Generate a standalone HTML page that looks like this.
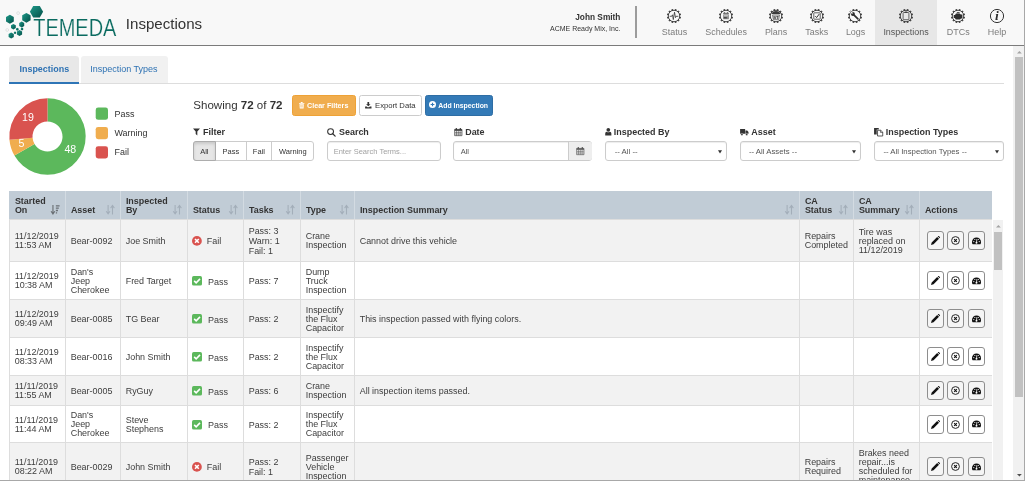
<!DOCTYPE html>
<html lang="en"><head><meta charset="utf-8"><title>Inspections</title>
<style>
html,body{margin:0;padding:0}
body{width:1025px;height:481px;overflow:hidden;position:relative;background:#fff;font-family:"Liberation Sans",Arial,Helvetica,sans-serif;color:#333}
.a{position:absolute}
.t{position:absolute;line-height:1;white-space:nowrap}
svg{position:absolute;overflow:visible}
#hdr{left:0;top:0;width:1025px;height:45px;background:#f8f8f8;border-bottom:1px solid #7b7b7b}
.nl{color:#858585}
.tab{position:absolute;top:56px;height:27px;border-radius:3px 3px 0 0}
.btn{position:absolute;top:95px;height:18.6px;border:1px solid;border-radius:2.5px}
.fc{position:absolute;top:141px;height:18px;border:1px solid #ccc;border-radius:3px;background:#fff;box-shadow:inset 0 1px 1px rgba(0,0,0,.075)}
.lb{font-weight:bold;color:#333}
.th{position:absolute;top:191px;height:28px;background:#c1ccd6;border-left:1px solid #d3dbe2;box-sizing:border-box}
.th .h{position:absolute;left:4.9px;bottom:3.6px;font-weight:bold;font-size:8.95px;line-height:9px;color:#333;white-space:nowrap}
.row{position:absolute;left:9px;width:983px;border-top:1px solid #ddd;box-sizing:border-box}
.odd{background:#f2f2f2}
.c{position:absolute;top:0;bottom:0;border-left:1px solid #ddd;box-sizing:border-box;display:flex;align-items:center;padding-left:4.7px;padding-top:1px;font-size:8.95px;line-height:9px;color:#3d3d3d}
.c.first{border-left-color:#ddd}
.tk{line-height:10px}
.st{font-size:9px;position:relative;top:1px}
.ab{position:absolute;width:15.2px;height:17px;border:1px solid #8e8e8e;border-radius:3px;top:50%;margin-top:-9.3px;background:rgba(255,255,255,.25)}
</style></head><body><div id="w" style="position:absolute;left:0;top:0;width:1025px;height:481px;will-change:transform">

<div class="a" id="hdr">
<div class="a" style="left:875px;top:0;width:62px;height:45px;background:#e7e7e7"></div>
<svg style="left:0;top:0" width="125" height="45" viewBox="0 0 125 45">
<defs><linearGradient id="hg" x1="0" y1="0" x2="1" y2="1"><stop offset="0" stop-color="#1f9a8a"/><stop offset="1" stop-color="#034f47"/></linearGradient></defs>
<g fill="url(#hg)">
<polygon points="43.1,11.8 39.8,17.5 33.2,17.5 29.9,11.8 33.2,6.1 39.8,6.1"/>
<polygon points="30.6,20.2 26.4,22.7 22.2,20.2 22.2,15.3 26.4,12.9 30.6,15.3"/>
<polygon points="13.8,21.4 9.9,23.7 6.0,21.4 6.0,16.9 9.9,14.7 13.8,16.9"/>
<polygon points="24.2,25.9 21.7,27.4 19.2,25.9 19.2,23.1 21.7,21.6 24.2,23.0"/>
<polygon points="15.8,28.1 13.4,29.5 11.0,28.1 11.0,25.3 13.4,23.9 15.8,25.3"/>
<polygon points="22.1,34.4 19.5,35.9 16.9,34.4 16.9,31.4 19.5,29.9 22.1,31.4"/>
<polygon points="13.8,36.9 11.2,38.4 8.6,36.9 8.6,33.9 11.2,32.4 13.8,33.9"/>
<polygon points="18.6,29.9 17.3,30.7 16.0,29.9 16.0,28.4 17.3,27.7 18.6,28.4"/>
<polygon points="23.2,29.7 22.0,30.4 20.8,29.7 20.8,28.3 22.0,27.6 23.2,28.3"/>
<polygon points="16.1,33.4 15.0,34.0 13.9,33.4 13.9,32.1 15.0,31.4 16.1,32.1"/>
</g>
<circle cx="18.1" cy="13.1" r="1.4" fill="none" stroke="#c9cfce" stroke-width=".5"/>
<circle cx="7.2" cy="30" r="1.4" fill="none" stroke="#c9cfce" stroke-width=".5"/>
<text x="33.2" y="35.8" font-family="Liberation Sans,Arial,sans-serif" font-size="23" fill="#0a6b60" stroke="#f8f8f8" stroke-width=".2" textLength="83.2" lengthAdjust="spacingAndGlyphs">TEMEDA</text>
</svg>
<div class="t " style="left:125.8px;top:16px;font-size:15.1px;color:#333">Inspections</div>
<div class="t" style="right:404.6px;top:13px;font-size:8.3px;font-weight:bold;color:#333">John Smith</div>
<div class="t" style="right:404.6px;top:25px;font-size:7px;color:#333">ACME Ready Mix, Inc.</div>
<div class="a" style="left:635px;top:6px;width:2px;height:32px;background:#9c9c9c"></div>
<svg style="left:666.3px;top:8.2px" width="16" height="16" viewBox="-8 -8 16 16"><g fill="#484848"><rect x="-.85" y="-7.15" width="1.7" height="1.5" rx=".4" transform="rotate(15)"/><rect x="-.85" y="-7.15" width="1.7" height="1.5" rx=".4" transform="rotate(45)"/><rect x="-.85" y="-7.15" width="1.7" height="1.5" rx=".4" transform="rotate(75)"/><rect x="-.85" y="-7.15" width="1.7" height="1.5" rx=".4" transform="rotate(105)"/><rect x="-.85" y="-7.15" width="1.7" height="1.5" rx=".4" transform="rotate(135)"/><rect x="-.85" y="-7.15" width="1.7" height="1.5" rx=".4" transform="rotate(165)"/><rect x="-.85" y="-7.15" width="1.7" height="1.5" rx=".4" transform="rotate(195)"/><rect x="-.85" y="-7.15" width="1.7" height="1.5" rx=".4" transform="rotate(225)"/><rect x="-.85" y="-7.15" width="1.7" height="1.5" rx=".4" transform="rotate(255)"/><rect x="-.85" y="-7.15" width="1.7" height="1.5" rx=".4" transform="rotate(285)"/><rect x="-.85" y="-7.15" width="1.7" height="1.5" rx=".4" transform="rotate(315)"/><rect x="-.85" y="-7.15" width="1.7" height="1.5" rx=".4" transform="rotate(345)"/></g><circle r="5.75" fill="none" stroke="#3a3a3a" stroke-width=".95"/><polyline points="-4.3,0.3 -2.3,0.3 -1.5,-1.2 -0.7,3.6 0.5,-3.8 1.5,1.6 2.1,0.3 4.3,0.3" fill="none" stroke="#333" stroke-width=".8" stroke-linejoin="round"/></svg>
<div class="t" style="left:574.5px;width:200px;text-align:center;top:28px;font-size:8.95px;color:#7c7c7c">Status</div>
<svg style="left:718px;top:8.2px" width="16" height="16" viewBox="-8 -8 16 16"><g fill="#484848"><rect x="-.85" y="-7.15" width="1.7" height="1.5" rx=".4" transform="rotate(15)"/><rect x="-.85" y="-7.15" width="1.7" height="1.5" rx=".4" transform="rotate(45)"/><rect x="-.85" y="-7.15" width="1.7" height="1.5" rx=".4" transform="rotate(75)"/><rect x="-.85" y="-7.15" width="1.7" height="1.5" rx=".4" transform="rotate(105)"/><rect x="-.85" y="-7.15" width="1.7" height="1.5" rx=".4" transform="rotate(135)"/><rect x="-.85" y="-7.15" width="1.7" height="1.5" rx=".4" transform="rotate(165)"/><rect x="-.85" y="-7.15" width="1.7" height="1.5" rx=".4" transform="rotate(195)"/><rect x="-.85" y="-7.15" width="1.7" height="1.5" rx=".4" transform="rotate(225)"/><rect x="-.85" y="-7.15" width="1.7" height="1.5" rx=".4" transform="rotate(255)"/><rect x="-.85" y="-7.15" width="1.7" height="1.5" rx=".4" transform="rotate(285)"/><rect x="-.85" y="-7.15" width="1.7" height="1.5" rx=".4" transform="rotate(315)"/><rect x="-.85" y="-7.15" width="1.7" height="1.5" rx=".4" transform="rotate(345)"/></g><circle r="5.75" fill="none" stroke="#3a3a3a" stroke-width=".95"/><rect x="-2.9" y="-1.7" width="5.8" height="4.9" rx=".4" fill="#8a8a8a"/><rect x="-2.9" y="-3.3" width="5.8" height="1.3" rx=".3" fill="#777"/><rect x="-2.2" y="-.5" width="4.4" height=".7" fill="#f4f4f4"/><rect x="-2.2" y="1.1" width="3" height="1.3" fill="#444"/><rect x="-1.8" y="-3.9" width=".8" height="1.2" fill="#555"/><rect x="1" y="-3.9" width=".8" height="1.2" fill="#555"/></svg>
<div class="t" style="left:626.2px;width:200px;text-align:center;top:28px;font-size:8.95px;color:#7c7c7c">Schedules</div>
<svg style="left:767.9px;top:8.2px" width="16" height="16" viewBox="-8 -8 16 16"><g fill="#484848"><rect x="-.85" y="-7.15" width="1.7" height="1.5" rx=".4" transform="rotate(15)"/><rect x="-.85" y="-7.15" width="1.7" height="1.5" rx=".4" transform="rotate(45)"/><rect x="-.85" y="-7.15" width="1.7" height="1.5" rx=".4" transform="rotate(75)"/><rect x="-.85" y="-7.15" width="1.7" height="1.5" rx=".4" transform="rotate(105)"/><rect x="-.85" y="-7.15" width="1.7" height="1.5" rx=".4" transform="rotate(135)"/><rect x="-.85" y="-7.15" width="1.7" height="1.5" rx=".4" transform="rotate(165)"/><rect x="-.85" y="-7.15" width="1.7" height="1.5" rx=".4" transform="rotate(195)"/><rect x="-.85" y="-7.15" width="1.7" height="1.5" rx=".4" transform="rotate(225)"/><rect x="-.85" y="-7.15" width="1.7" height="1.5" rx=".4" transform="rotate(255)"/><rect x="-.85" y="-7.15" width="1.7" height="1.5" rx=".4" transform="rotate(285)"/><rect x="-.85" y="-7.15" width="1.7" height="1.5" rx=".4" transform="rotate(315)"/><rect x="-.85" y="-7.15" width="1.7" height="1.5" rx=".4" transform="rotate(345)"/></g><circle r="5.75" fill="none" stroke="#3a3a3a" stroke-width=".95"/><path d="M-4.7,-1.9 A5.1,5.1 0 0 1 4.7,-1.9 Z" fill="#3a3a3a"/><path d="M-3.5,-1.1 H3.5 L2.6,3.7 H-2.6Z" fill="#d8d8d8" stroke="#555" stroke-width=".7"/><text x="0" y="2.7" font-size="4.3" font-weight="bold" text-anchor="middle" fill="#333" font-family="Liberation Sans,Arial,sans-serif">ST</text></svg>
<div class="t" style="left:676.1px;width:200px;text-align:center;top:28px;font-size:8.95px;color:#7c7c7c">Plans</div>
<svg style="left:808.5px;top:8.2px" width="16" height="16" viewBox="-8 -8 16 16"><g fill="#484848"><rect x="-.85" y="-7.15" width="1.7" height="1.5" rx=".4" transform="rotate(15)"/><rect x="-.85" y="-7.15" width="1.7" height="1.5" rx=".4" transform="rotate(45)"/><rect x="-.85" y="-7.15" width="1.7" height="1.5" rx=".4" transform="rotate(75)"/><rect x="-.85" y="-7.15" width="1.7" height="1.5" rx=".4" transform="rotate(105)"/><rect x="-.85" y="-7.15" width="1.7" height="1.5" rx=".4" transform="rotate(135)"/><rect x="-.85" y="-7.15" width="1.7" height="1.5" rx=".4" transform="rotate(165)"/><rect x="-.85" y="-7.15" width="1.7" height="1.5" rx=".4" transform="rotate(195)"/><rect x="-.85" y="-7.15" width="1.7" height="1.5" rx=".4" transform="rotate(225)"/><rect x="-.85" y="-7.15" width="1.7" height="1.5" rx=".4" transform="rotate(255)"/><rect x="-.85" y="-7.15" width="1.7" height="1.5" rx=".4" transform="rotate(285)"/><rect x="-.85" y="-7.15" width="1.7" height="1.5" rx=".4" transform="rotate(315)"/><rect x="-.85" y="-7.15" width="1.7" height="1.5" rx=".4" transform="rotate(345)"/></g><circle r="5.75" fill="none" stroke="#3a3a3a" stroke-width=".95"/><rect x="-3.2" y="-3.2" width="6.4" height="6.4" rx=".5" fill="none" stroke="#444" stroke-width=".85"/><polyline points="-1.7,0.1 -.4,1.6 2.2,-1.9" fill="none" stroke="#333" stroke-width="1"/></svg>
<div class="t" style="left:716.7px;width:200px;text-align:center;top:28px;font-size:8.95px;color:#7c7c7c">Tasks</div>
<svg style="left:847.4px;top:8.2px" width="16" height="16" viewBox="-8 -8 16 16"><g fill="#484848"><rect x="-.85" y="-7.15" width="1.7" height="1.5" rx=".4" transform="rotate(15)"/><rect x="-.85" y="-7.15" width="1.7" height="1.5" rx=".4" transform="rotate(45)"/><rect x="-.85" y="-7.15" width="1.7" height="1.5" rx=".4" transform="rotate(75)"/><rect x="-.85" y="-7.15" width="1.7" height="1.5" rx=".4" transform="rotate(105)"/><rect x="-.85" y="-7.15" width="1.7" height="1.5" rx=".4" transform="rotate(135)"/><rect x="-.85" y="-7.15" width="1.7" height="1.5" rx=".4" transform="rotate(165)"/><rect x="-.85" y="-7.15" width="1.7" height="1.5" rx=".4" transform="rotate(195)"/><rect x="-.85" y="-7.15" width="1.7" height="1.5" rx=".4" transform="rotate(225)"/><rect x="-.85" y="-7.15" width="1.7" height="1.5" rx=".4" transform="rotate(255)"/><rect x="-.85" y="-7.15" width="1.7" height="1.5" rx=".4" transform="rotate(285)"/><rect x="-.85" y="-7.15" width="1.7" height="1.5" rx=".4" transform="rotate(315)"/><rect x="-.85" y="-7.15" width="1.7" height="1.5" rx=".4" transform="rotate(345)"/></g><circle r="5.75" fill="none" stroke="#3a3a3a" stroke-width=".95"/><path d="M-1.2,-1.2 L2.9,2.9" stroke="#2e2e2e" stroke-width="1.7" stroke-linecap="round"/><circle cx="-2.1" cy="-2.1" r="2" fill="#2e2e2e"/><path d="M-2.5,-2.5 L-4.6,-4.6" stroke="#f8f8f8" stroke-width="1.3"/></svg>
<div class="t" style="left:755.6px;width:200px;text-align:center;top:28px;font-size:8.95px;color:#7c7c7c">Logs</div>
<svg style="left:897.8px;top:8.2px" width="16" height="16" viewBox="-8 -8 16 16"><g fill="#484848"><rect x="-.85" y="-7.15" width="1.7" height="1.5" rx=".4" transform="rotate(15)"/><rect x="-.85" y="-7.15" width="1.7" height="1.5" rx=".4" transform="rotate(45)"/><rect x="-.85" y="-7.15" width="1.7" height="1.5" rx=".4" transform="rotate(75)"/><rect x="-.85" y="-7.15" width="1.7" height="1.5" rx=".4" transform="rotate(105)"/><rect x="-.85" y="-7.15" width="1.7" height="1.5" rx=".4" transform="rotate(135)"/><rect x="-.85" y="-7.15" width="1.7" height="1.5" rx=".4" transform="rotate(165)"/><rect x="-.85" y="-7.15" width="1.7" height="1.5" rx=".4" transform="rotate(195)"/><rect x="-.85" y="-7.15" width="1.7" height="1.5" rx=".4" transform="rotate(225)"/><rect x="-.85" y="-7.15" width="1.7" height="1.5" rx=".4" transform="rotate(255)"/><rect x="-.85" y="-7.15" width="1.7" height="1.5" rx=".4" transform="rotate(285)"/><rect x="-.85" y="-7.15" width="1.7" height="1.5" rx=".4" transform="rotate(315)"/><rect x="-.85" y="-7.15" width="1.7" height="1.5" rx=".4" transform="rotate(345)"/></g><circle r="5.75" fill="none" stroke="#3a3a3a" stroke-width=".95"/><rect x="-2.9" y="-3.5" width="5.8" height="7.2" rx=".8" fill="none" stroke="#444" stroke-width=".8"/><rect x="-1.3" y="-4.6" width="2.6" height="1.5" rx=".3" fill="#444"/></svg>
<div class="t" style="left:806.0px;width:200px;text-align:center;top:28px;font-size:8.95px;color:#555">Inspections</div>
<svg style="left:950px;top:8.2px" width="16" height="16" viewBox="-8 -8 16 16"><g fill="#484848"><rect x="-.85" y="-7.15" width="1.7" height="1.5" rx=".4" transform="rotate(15)"/><rect x="-.85" y="-7.15" width="1.7" height="1.5" rx=".4" transform="rotate(45)"/><rect x="-.85" y="-7.15" width="1.7" height="1.5" rx=".4" transform="rotate(75)"/><rect x="-.85" y="-7.15" width="1.7" height="1.5" rx=".4" transform="rotate(105)"/><rect x="-.85" y="-7.15" width="1.7" height="1.5" rx=".4" transform="rotate(135)"/><rect x="-.85" y="-7.15" width="1.7" height="1.5" rx=".4" transform="rotate(165)"/><rect x="-.85" y="-7.15" width="1.7" height="1.5" rx=".4" transform="rotate(195)"/><rect x="-.85" y="-7.15" width="1.7" height="1.5" rx=".4" transform="rotate(225)"/><rect x="-.85" y="-7.15" width="1.7" height="1.5" rx=".4" transform="rotate(255)"/><rect x="-.85" y="-7.15" width="1.7" height="1.5" rx=".4" transform="rotate(285)"/><rect x="-.85" y="-7.15" width="1.7" height="1.5" rx=".4" transform="rotate(315)"/><rect x="-.85" y="-7.15" width="1.7" height="1.5" rx=".4" transform="rotate(345)"/></g><circle r="5.75" fill="none" stroke="#3a3a3a" stroke-width=".95"/><path d="M-4.3,-1 L-3,-1 L-2,-2.6 L1.6,-2.6 L2.8,-1.4 L4.4,-1.4 L4.4,2.4 L3,2.4 L2,3.5 L-2.2,3.5 L-3.2,2 L-4.3,2Z" fill="#2e2e2e"/><rect x="-1.2" y="-3.8" width="2.8" height="1" fill="#2e2e2e"/></svg>
<div class="t" style="left:858.2px;width:200px;text-align:center;top:28px;font-size:8.95px;color:#7c7c7c">DTCs</div>
<svg style="left:988.8px;top:8px" width="16" height="16" viewBox="-8 -8 16 16"><circle r="6.6" fill="none" stroke="#333" stroke-width="1"/><text x="-.2" y="4.3" font-size="13.5" font-style="italic" font-weight="bold" text-anchor="middle" fill="#2e2e2e" font-family="Liberation Serif,serif">i</text></svg>
<div class="t" style="left:897.0px;width:200px;text-align:center;top:28px;font-size:8.95px;color:#7c7c7c">Help</div>
</div>
<div class="a" style="left:9px;top:83px;width:995px;height:1px;background:#ddd"></div>
<div class="tab" style="left:9px;width:70px;background:#e8e8e8;border-bottom:2px solid #2e75b6;height:26px"></div>
<div class="tab" style="left:81px;width:87px;background:#f1f1f1"></div>
<div class="t " style="left:19.5px;top:65px;font-size:8.95px;font-weight:bold;color:#2e72b3">Inspections</div>
<div class="t " style="left:90.2px;top:65px;font-size:9px;color:#2e72b3">Inspection Types</div>
<svg style="left:0;top:90px" width="190" height="95" viewBox="0 90 190 95">
<path d="M47.50,98.30 A38.2,38.2 0 1 1 14.42,155.60 L34.51,144.00 A15,15 0 1 0 47.50,121.50Z" fill="#5cb85c"/>
<path d="M14.42,155.60 A38.2,38.2 0 0 1 9.45,139.83 L32.56,137.81 A15,15 0 0 0 34.51,144.00Z" fill="#f0ad4e"/>
<path d="M9.45,139.83 A38.2,38.2 0 0 1 47.50,98.30 L47.50,121.50 A15,15 0 0 0 32.56,137.81Z" fill="#d9534f"/>
<g font-family="Liberation Sans,Arial,sans-serif" font-size="10.6" fill="#fff">
<text x="22" y="121.2">19</text><text x="18.6" y="147.4">5</text><text x="64.4" y="152.7">48</text></g>
<rect x="95.7" y="107.5" width="12.3" height="12.3" rx="2.4" fill="#5cb85c"/>
<rect x="95.7" y="126.9" width="12.3" height="12.3" rx="2.4" fill="#f0ad4e"/>
<rect x="95.7" y="146.2" width="12.3" height="12.3" rx="2.4" fill="#d9534f"/>
</svg>
<div class="t " style="left:114.5px;top:110px;font-size:8.95px;color:#333">Pass</div>
<div class="t " style="left:114.5px;top:129px;font-size:8.95px;color:#333">Warning</div>
<div class="t " style="left:114.5px;top:148px;font-size:8.95px;color:#333">Fail</div>
<div class="t " style="left:193.3px;top:100px;font-size:11.55px;color:#333">Showing <b>72</b> of <b>72</b></div>
<div class="btn" style="left:292px;width:62px;background:#f0ad4e;border-color:#eea236"></div>
<div class="btn" style="left:359px;width:61px;background:#fff;border-color:#ccc"></div>
<div class="btn" style="left:425px;width:66px;background:#337ab7;border-color:#2e6da4"></div>
<svg style="left:299.3px;top:101.5px" width="5.4" height="6.6" viewBox="0 0 11 13"><path d="M0,2 H11 V3.4 H0Z M3.6,0 H7.4 V2 H3.6Z M1,4.2 H10 L9.4,13 H1.6Z" fill="#fff"/><path d="M3.4,5.8 V11 M5.5,5.8 V11 M7.6,5.8 V11" stroke="#f0ad4e" stroke-width=".9"/></svg>
<div class="t " style="left:307px;top:103px;font-size:7.17px;font-weight:bold;color:#fff">Clear Filters</div>
<svg style="left:365.2px;top:101.6px" width="6.6" height="6.4" viewBox="0 0 12 12"><path d="M4.4,0 H7.6 V4 H10.2 L6,8.2 L1.8,4 H4.4Z M0,8.6 H3 L4.4,10 H7.6 L9,8.6 H12 V12 H0Z" fill="#333"/></svg>
<div class="t " style="left:375px;top:102px;font-size:7.7px;color:#333">Export Data</div>
<svg style="left:429.2px;top:101.3px" width="7" height="7" viewBox="0 0 12 12"><circle cx="6" cy="6" r="6" fill="#fff"/><path d="M6,2.8 V9.2 M2.8,6 H9.2" stroke="#337ab7" stroke-width="1.9"/></svg>
<div class="t " style="left:438.2px;top:103px;font-size:6.92px;font-weight:bold;color:#fff">Add Inspection</div>
<svg style="left:193.2px;top:128.2px" width="7" height="7.8" viewBox="0 0 12 12"><path d="M0,0 H12 L7.4,5.4 V12 L4.6,9.8 V5.4Z" fill="#333"/></svg>
<div class="t lb" style="left:202.9px;top:128px;font-size:9.1px;">Filter</div>
<svg style="left:327px;top:127.6px" width="8.6" height="8.6" viewBox="0 0 12 12"><circle cx="5" cy="5" r="4.1" fill="none" stroke="#333" stroke-width="1.45"/><path d="M8,8 L11.4,11.4" stroke="#333" stroke-width="1.7" stroke-linecap="round"/></svg>
<div class="t lb" style="left:339px;top:128px;font-size:8.95px;">Search</div>
<svg style="left:454px;top:127.6px" width="8.6" height="8" viewBox="0 0 12 12"><path d="M.5,2.1 H11.5 V11.5 H.5Z" fill="#fff" stroke="#333" stroke-width="1"/><path d="M.5,2.1 H11.5 V4.2 H.5Z" fill="#333"/><path d="M3,0 V3 M9,0 V3" stroke="#333" stroke-width="1.7"/><path d="M1,6.6 H11 M1,9 H11 M3.3,4 V11.4 M6,4 V11.4 M8.7,4 V11.4" stroke="#333" stroke-width=".75"/></svg>
<div class="t lb" style="left:465.2px;top:128px;font-size:8.95px;">Date</div>
<svg style="left:605.2px;top:127.8px" width="6.6" height="7.4" viewBox="0 0 10 12"><circle cx="5" cy="3" r="3" fill="#333"/><path d="M0,12 V9 Q0,6.4 2.4,6.2 Q5,8 7.6,6.2 Q10,6.4 10,9 V12Z" fill="#333"/></svg>
<div class="t lb" style="left:613.8px;top:128px;font-size:8.95px;">Inspected By</div>
<svg style="left:739.8px;top:128.6px" width="8.6" height="6.6" viewBox="0 0 14 11"><path d="M0,0 H8.4 V8 H0Z M9,2.4 H11.8 L14,5 V8 H9Z" fill="#333"/><circle cx="3" cy="9" r="1.8" fill="#333" stroke="#fff" stroke-width=".6"/><circle cx="11" cy="9" r="1.8" fill="#333" stroke="#fff" stroke-width=".6"/></svg>
<div class="t lb" style="left:751.3px;top:128px;font-size:8.95px;">Asset</div>
<svg style="left:874px;top:127.6px" width="8.8" height="8" viewBox="0 0 13 12"><path d="M0,0 H7 V2.4 H4 V9.6 H0Z" fill="#333"/><path d="M5.2,3.4 H10 L13,6.2 V12 H5.2Z" fill="none" stroke="#333" stroke-width="1.2"/><path d="M9.6,3.4 V6.6 H13" fill="none" stroke="#333" stroke-width="1"/></svg>
<div class="t lb" style="left:885.8px;top:128px;font-size:8.95px;">Inspection Types</div>
<div class="fc" style="left:193px;width:118.6px;box-shadow:none"></div>
<div class="a" style="left:193px;top:141px;width:20.8px;height:18px;border:1px solid #adadad;border-radius:3px 0 0 3px;background:#e6e6e6;box-shadow:inset 0 2px 3px rgba(0,0,0,.125)"></div>
<div class="a" style="left:246px;top:142px;width:1px;height:18px;background:#ccc"></div>
<div class="a" style="left:271.3px;top:142px;width:1px;height:18px;background:#ccc"></div>
<div class="t" style="left:104.30000000000001px;width:200px;text-align:center;top:148px;font-size:7.5px;color:#333">All</div>
<div class="t" style="left:130.8px;width:200px;text-align:center;top:148px;font-size:7.5px;color:#333">Pass</div>
<div class="t" style="left:158.89999999999998px;width:200px;text-align:center;top:148px;font-size:7.5px;color:#333">Fail</div>
<div class="t" style="left:192.8px;width:200px;text-align:center;top:148px;font-size:7.5px;color:#333">Warning</div>
<div class="fc" style="left:327px;width:112px"></div>
<div class="t " style="left:333.7px;top:148px;font-size:7.5px;color:#a2a2a2">Enter Search Terms...</div>
<div class="fc" style="left:453.4px;width:136.6px"></div>
<div class="a" style="left:568px;top:142px;width:23px;height:18px;background:#eee;border-left:1px solid #ccc;border-radius:0 2px 2px 0"></div>
<svg style="left:575.6px;top:146.6px" width="8.6" height="8" viewBox="0 0 12 12"><path d="M.5,2.1 H11.5 V11.5 H.5Z" fill="#eee" stroke="#555" stroke-width="1"/><path d="M.5,2.1 H11.5 V4.2 H.5Z" fill="#555"/><path d="M3,0 V3 M9,0 V3" stroke="#555" stroke-width="1.7"/><path d="M1,6.6 H11 M1,9 H11 M3.3,4 V11.4 M6,4 V11.4 M8.7,4 V11.4" stroke="#555" stroke-width=".75"/></svg>
<div class="t " style="left:460.7px;top:148px;font-size:7.5px;color:#555">All</div>
<div class="fc" style="left:605.3px;width:119.6px"></div>
<div class="t " style="left:614.6999999999999px;top:148px;font-size:7.8px;color:#555">-- All --</div>
<svg style="left:717.9px;top:149.8px" width="4" height="3.7" viewBox="0 0 10 8"><path d="M0,0 H10 L5,8Z" fill="#333"/></svg>
<div class="fc" style="left:739.5px;width:119.6px"></div>
<div class="t " style="left:748.9px;top:148px;font-size:7.8px;color:#555">-- All Assets --</div>
<svg style="left:852.1px;top:149.8px" width="4" height="3.7" viewBox="0 0 10 8"><path d="M0,0 H10 L5,8Z" fill="#333"/></svg>
<div class="fc" style="left:874px;width:128px"></div>
<div class="t " style="left:883.4px;top:148px;font-size:7.8px;color:#555">-- All Inspection Types --</div>
<svg style="left:995px;top:149.8px" width="4" height="3.7" viewBox="0 0 10 8"><path d="M0,0 H10 L5,8Z" fill="#333"/></svg>
<div class="th" style="left:9px;width:56px;border-left-color:#c1ccd6;"><div class="h">Started<br>On</div><svg style="right:5.6px;bottom:5px" width="8.6" height="9.4" viewBox="0 0 11 12"><path d="M2.5,0 V10.6 M.1,8 L2.5,11.4 L4.9,8" fill="none" stroke="#6a6f74" stroke-width="1.45"/><path d="M6.2,1 H11 M6.2,4 H10 M6.2,7 H8.9 M6.2,10 H7.8" stroke="#6a6f74" stroke-width="1.7"/></svg></div>
<div class="th" style="left:65px;width:55px;"><div class="h">Asset</div><svg style="right:5.4px;bottom:5px" width="8.6" height="9.4" viewBox="0 0 11 12"><path d="M2.7,0 V10.6 M.3,8 L2.7,11.4 L5.1,8" fill="none" stroke="#a3aeb9" stroke-width="1.35"/><path d="M8.3,12 V1.4 M5.9,4 L8.3,.6 L10.7,4" fill="none" stroke="#a3aeb9" stroke-width="1.35"/></svg></div>
<div class="th" style="left:120px;width:67px;"><div class="h">Inspected<br>By</div><svg style="right:5.4px;bottom:5px" width="8.6" height="9.4" viewBox="0 0 11 12"><path d="M2.7,0 V10.6 M.3,8 L2.7,11.4 L5.1,8" fill="none" stroke="#a3aeb9" stroke-width="1.35"/><path d="M8.3,12 V1.4 M5.9,4 L8.3,.6 L10.7,4" fill="none" stroke="#a3aeb9" stroke-width="1.35"/></svg></div>
<div class="th" style="left:187px;width:56px;"><div class="h">Status</div><svg style="right:5.4px;bottom:5px" width="8.6" height="9.4" viewBox="0 0 11 12"><path d="M2.7,0 V10.6 M.3,8 L2.7,11.4 L5.1,8" fill="none" stroke="#a3aeb9" stroke-width="1.35"/><path d="M8.3,12 V1.4 M5.9,4 L8.3,.6 L10.7,4" fill="none" stroke="#a3aeb9" stroke-width="1.35"/></svg></div>
<div class="th" style="left:243px;width:57px;"><div class="h">Tasks</div><svg style="right:5.4px;bottom:5px" width="8.6" height="9.4" viewBox="0 0 11 12"><path d="M2.7,0 V10.6 M.3,8 L2.7,11.4 L5.1,8" fill="none" stroke="#a3aeb9" stroke-width="1.35"/><path d="M8.3,12 V1.4 M5.9,4 L8.3,.6 L10.7,4" fill="none" stroke="#a3aeb9" stroke-width="1.35"/></svg></div>
<div class="th" style="left:300px;width:54px;"><div class="h">Type</div><svg style="right:5.4px;bottom:5px" width="8.6" height="9.4" viewBox="0 0 11 12"><path d="M2.7,0 V10.6 M.3,8 L2.7,11.4 L5.1,8" fill="none" stroke="#a3aeb9" stroke-width="1.35"/><path d="M8.3,12 V1.4 M5.9,4 L8.3,.6 L10.7,4" fill="none" stroke="#a3aeb9" stroke-width="1.35"/></svg></div>
<div class="th" style="left:354px;width:445px;"><div class="h">Inspection Summary</div><svg style="right:5.4px;bottom:5px" width="8.6" height="9.4" viewBox="0 0 11 12"><path d="M2.7,0 V10.6 M.3,8 L2.7,11.4 L5.1,8" fill="none" stroke="#a3aeb9" stroke-width="1.35"/><path d="M8.3,12 V1.4 M5.9,4 L8.3,.6 L10.7,4" fill="none" stroke="#a3aeb9" stroke-width="1.35"/></svg></div>
<div class="th" style="left:799px;width:54px;"><div class="h">CA<br>Status</div><svg style="right:5.4px;bottom:5px" width="8.6" height="9.4" viewBox="0 0 11 12"><path d="M2.7,0 V10.6 M.3,8 L2.7,11.4 L5.1,8" fill="none" stroke="#a3aeb9" stroke-width="1.35"/><path d="M8.3,12 V1.4 M5.9,4 L8.3,.6 L10.7,4" fill="none" stroke="#a3aeb9" stroke-width="1.35"/></svg></div>
<div class="th" style="left:853px;width:66px;"><div class="h">CA<br>Summary</div><svg style="right:5.4px;bottom:5px" width="8.6" height="9.4" viewBox="0 0 11 12"><path d="M2.7,0 V10.6 M.3,8 L2.7,11.4 L5.1,8" fill="none" stroke="#a3aeb9" stroke-width="1.35"/><path d="M8.3,12 V1.4 M5.9,4 L8.3,.6 L10.7,4" fill="none" stroke="#a3aeb9" stroke-width="1.35"/></svg></div>
<div class="th" style="left:919px;width:73px;"><div class="h">Actions</div></div>
<div class="a" style="left:0;top:219px;width:1013px;height:261px;overflow:hidden">
<div class="row odd" style="top:0px;height:42px">
<div class="c" style="left:0px;width:56px;border-left-color:transparent;"><div style="display:flex;align-items:center">11/12/2019<br>11:53 AM</div></div>
<div class="c" style="left:56px;width:55px;"><div style="display:flex;align-items:center">Bear-0092</div></div>
<div class="c" style="left:111px;width:67px;"><div style="display:flex;align-items:center">Joe Smith</div></div>
<div class="c" style="left:178px;width:56px;"><div style="display:flex;align-items:center"><svg style="position:static;flex:none;margin-left:-.8px;margin-right:5px" width="9.8" height="9.8" viewBox="0 0 12 12"><circle cx="6" cy="6" r="6" fill="#d9534f"/><path d="M3.7,3.7 L8.3,8.3 M8.3,3.7 L3.7,8.3" stroke="#fff" stroke-width="2"/></svg><span class="st">Fail</span></div></div>
<div class="c tk" style="left:234px;width:57px;"><div style="display:flex;align-items:center">Pass: 3<br>Warn: 1<br>Fail: 1</div></div>
<div class="c" style="left:291px;width:54px;"><div style="display:flex;align-items:center">Crane<br>Inspection</div></div>
<div class="c" style="left:345px;width:445px;"><div style="display:flex;align-items:center">Cannot drive this vehicle</div></div>
<div class="c" style="left:790px;width:54px;"><div style="display:flex;align-items:center">Repairs<br>Completed</div></div>
<div class="c" style="left:844px;width:66px;"><div style="display:flex;align-items:center">Tire was<br>replaced on<br>11/12/2019</div></div>
<div class="c" style="left:910px;width:73px"><div class="ab" style="left:7px"><svg style="left:3.2px;top:4.2px" width="9" height="9" viewBox="0 0 12 12"><path d="M0,12 L.9,8.6 L8.2,1.3 L10.7,3.8 L3.4,11.1Z M9,.5 L9.6,0 Q10.2,-.3 10.8,.3 L11.7,1.2 Q12.3,1.8 12,2.4 L11.5,3Z" fill="#111"/></svg></div><div class="ab" style="left:27.2px"><svg style="left:3.1px;top:4.2px" width="9" height="9" viewBox="0 0 12 12"><circle cx="6" cy="6" r="5.2" fill="none" stroke="#111" stroke-width="1.2"/><path d="M4.2,4.2 L7.8,7.8 M7.8,4.2 L4.2,7.8" stroke="#111" stroke-width="1.5"/></svg></div><div class="ab" style="left:47.5px"><svg style="left:3.1px;top:4.6px" width="9" height="7.2" viewBox="0 0 14 11"><path d="M0,8 A7,7.4 0 0 1 14,8 Q14,10 13,11 H1 Q0,10 0,8Z" fill="#111"/><circle cx="2.8" cy="7" r=".9" fill="#fff"/><circle cx="4.4" cy="3.8" r=".9" fill="#fff"/><circle cx="9.8" cy="3.8" r=".9" fill="#fff"/><circle cx="11.3" cy="7" r=".9" fill="#fff"/><path d="M7,9 L7.6,3" stroke="#fff" stroke-width="1.2"/><circle cx="7" cy="8.8" r="1.5" fill="#fff"/></svg></div></div>
</div>
<div class="row " style="top:42px;height:38px">
<div class="c" style="left:0px;width:56px;border-left-color:transparent;"><div style="display:flex;align-items:center">11/12/2019<br>10:38 AM</div></div>
<div class="c" style="left:56px;width:55px;"><div style="display:flex;align-items:center">Dan's<br>Jeep<br>Cherokee</div></div>
<div class="c" style="left:111px;width:67px;"><div style="display:flex;align-items:center">Fred Target</div></div>
<div class="c" style="left:178px;width:56px;"><div style="display:flex;align-items:center"><svg style="position:static;flex:none;margin-left:-.5px;margin-right:5.8px" width="10" height="9.6" viewBox="0 0 12 11.5"><rect width="12" height="11.5" rx="2" fill="#5cb85c"/><path d="M2.6,5.8 L5,8.2 L9.6,3.4" fill="none" stroke="#fff" stroke-width="1.9"/></svg><span class="st">Pass</span></div></div>
<div class="c tk" style="left:234px;width:57px;"><div style="display:flex;align-items:center">Pass: 7</div></div>
<div class="c" style="left:291px;width:54px;"><div style="display:flex;align-items:center">Dump<br>Truck<br>Inspection</div></div>
<div class="c" style="left:345px;width:445px;"><div style="display:flex;align-items:center"></div></div>
<div class="c" style="left:790px;width:54px;"><div style="display:flex;align-items:center"></div></div>
<div class="c" style="left:844px;width:66px;"><div style="display:flex;align-items:center"></div></div>
<div class="c" style="left:910px;width:73px"><div class="ab" style="left:7px"><svg style="left:3.2px;top:4.2px" width="9" height="9" viewBox="0 0 12 12"><path d="M0,12 L.9,8.6 L8.2,1.3 L10.7,3.8 L3.4,11.1Z M9,.5 L9.6,0 Q10.2,-.3 10.8,.3 L11.7,1.2 Q12.3,1.8 12,2.4 L11.5,3Z" fill="#111"/></svg></div><div class="ab" style="left:27.2px"><svg style="left:3.1px;top:4.2px" width="9" height="9" viewBox="0 0 12 12"><circle cx="6" cy="6" r="5.2" fill="none" stroke="#111" stroke-width="1.2"/><path d="M4.2,4.2 L7.8,7.8 M7.8,4.2 L4.2,7.8" stroke="#111" stroke-width="1.5"/></svg></div><div class="ab" style="left:47.5px"><svg style="left:3.1px;top:4.6px" width="9" height="7.2" viewBox="0 0 14 11"><path d="M0,8 A7,7.4 0 0 1 14,8 Q14,10 13,11 H1 Q0,10 0,8Z" fill="#111"/><circle cx="2.8" cy="7" r=".9" fill="#fff"/><circle cx="4.4" cy="3.8" r=".9" fill="#fff"/><circle cx="9.8" cy="3.8" r=".9" fill="#fff"/><circle cx="11.3" cy="7" r=".9" fill="#fff"/><path d="M7,9 L7.6,3" stroke="#fff" stroke-width="1.2"/><circle cx="7" cy="8.8" r="1.5" fill="#fff"/></svg></div></div>
</div>
<div class="row odd" style="top:80px;height:38px">
<div class="c" style="left:0px;width:56px;border-left-color:transparent;"><div style="display:flex;align-items:center">11/12/2019<br>09:49 AM</div></div>
<div class="c" style="left:56px;width:55px;"><div style="display:flex;align-items:center">Bear-0085</div></div>
<div class="c" style="left:111px;width:67px;"><div style="display:flex;align-items:center">TG Bear</div></div>
<div class="c" style="left:178px;width:56px;"><div style="display:flex;align-items:center"><svg style="position:static;flex:none;margin-left:-.5px;margin-right:5.8px" width="10" height="9.6" viewBox="0 0 12 11.5"><rect width="12" height="11.5" rx="2" fill="#5cb85c"/><path d="M2.6,5.8 L5,8.2 L9.6,3.4" fill="none" stroke="#fff" stroke-width="1.9"/></svg><span class="st">Pass</span></div></div>
<div class="c tk" style="left:234px;width:57px;"><div style="display:flex;align-items:center">Pass: 2</div></div>
<div class="c" style="left:291px;width:54px;"><div style="display:flex;align-items:center">Inspectify<br>the Flux<br>Capacitor</div></div>
<div class="c" style="left:345px;width:445px;"><div style="display:flex;align-items:center">This inspection passed with flying colors.</div></div>
<div class="c" style="left:790px;width:54px;"><div style="display:flex;align-items:center"></div></div>
<div class="c" style="left:844px;width:66px;"><div style="display:flex;align-items:center"></div></div>
<div class="c" style="left:910px;width:73px"><div class="ab" style="left:7px"><svg style="left:3.2px;top:4.2px" width="9" height="9" viewBox="0 0 12 12"><path d="M0,12 L.9,8.6 L8.2,1.3 L10.7,3.8 L3.4,11.1Z M9,.5 L9.6,0 Q10.2,-.3 10.8,.3 L11.7,1.2 Q12.3,1.8 12,2.4 L11.5,3Z" fill="#111"/></svg></div><div class="ab" style="left:27.2px"><svg style="left:3.1px;top:4.2px" width="9" height="9" viewBox="0 0 12 12"><circle cx="6" cy="6" r="5.2" fill="none" stroke="#111" stroke-width="1.2"/><path d="M4.2,4.2 L7.8,7.8 M7.8,4.2 L4.2,7.8" stroke="#111" stroke-width="1.5"/></svg></div><div class="ab" style="left:47.5px"><svg style="left:3.1px;top:4.6px" width="9" height="7.2" viewBox="0 0 14 11"><path d="M0,8 A7,7.4 0 0 1 14,8 Q14,10 13,11 H1 Q0,10 0,8Z" fill="#111"/><circle cx="2.8" cy="7" r=".9" fill="#fff"/><circle cx="4.4" cy="3.8" r=".9" fill="#fff"/><circle cx="9.8" cy="3.8" r=".9" fill="#fff"/><circle cx="11.3" cy="7" r=".9" fill="#fff"/><path d="M7,9 L7.6,3" stroke="#fff" stroke-width="1.2"/><circle cx="7" cy="8.8" r="1.5" fill="#fff"/></svg></div></div>
</div>
<div class="row " style="top:118px;height:38px">
<div class="c" style="left:0px;width:56px;border-left-color:transparent;"><div style="display:flex;align-items:center">11/12/2019<br>08:33 AM</div></div>
<div class="c" style="left:56px;width:55px;"><div style="display:flex;align-items:center">Bear-0016</div></div>
<div class="c" style="left:111px;width:67px;"><div style="display:flex;align-items:center">John Smith</div></div>
<div class="c" style="left:178px;width:56px;"><div style="display:flex;align-items:center"><svg style="position:static;flex:none;margin-left:-.5px;margin-right:5.8px" width="10" height="9.6" viewBox="0 0 12 11.5"><rect width="12" height="11.5" rx="2" fill="#5cb85c"/><path d="M2.6,5.8 L5,8.2 L9.6,3.4" fill="none" stroke="#fff" stroke-width="1.9"/></svg><span class="st">Pass</span></div></div>
<div class="c tk" style="left:234px;width:57px;"><div style="display:flex;align-items:center">Pass: 2</div></div>
<div class="c" style="left:291px;width:54px;"><div style="display:flex;align-items:center">Inspectify<br>the Flux<br>Capacitor</div></div>
<div class="c" style="left:345px;width:445px;"><div style="display:flex;align-items:center"></div></div>
<div class="c" style="left:790px;width:54px;"><div style="display:flex;align-items:center"></div></div>
<div class="c" style="left:844px;width:66px;"><div style="display:flex;align-items:center"></div></div>
<div class="c" style="left:910px;width:73px"><div class="ab" style="left:7px"><svg style="left:3.2px;top:4.2px" width="9" height="9" viewBox="0 0 12 12"><path d="M0,12 L.9,8.6 L8.2,1.3 L10.7,3.8 L3.4,11.1Z M9,.5 L9.6,0 Q10.2,-.3 10.8,.3 L11.7,1.2 Q12.3,1.8 12,2.4 L11.5,3Z" fill="#111"/></svg></div><div class="ab" style="left:27.2px"><svg style="left:3.1px;top:4.2px" width="9" height="9" viewBox="0 0 12 12"><circle cx="6" cy="6" r="5.2" fill="none" stroke="#111" stroke-width="1.2"/><path d="M4.2,4.2 L7.8,7.8 M7.8,4.2 L4.2,7.8" stroke="#111" stroke-width="1.5"/></svg></div><div class="ab" style="left:47.5px"><svg style="left:3.1px;top:4.6px" width="9" height="7.2" viewBox="0 0 14 11"><path d="M0,8 A7,7.4 0 0 1 14,8 Q14,10 13,11 H1 Q0,10 0,8Z" fill="#111"/><circle cx="2.8" cy="7" r=".9" fill="#fff"/><circle cx="4.4" cy="3.8" r=".9" fill="#fff"/><circle cx="9.8" cy="3.8" r=".9" fill="#fff"/><circle cx="11.3" cy="7" r=".9" fill="#fff"/><path d="M7,9 L7.6,3" stroke="#fff" stroke-width="1.2"/><circle cx="7" cy="8.8" r="1.5" fill="#fff"/></svg></div></div>
</div>
<div class="row odd" style="top:156px;height:30px">
<div class="c" style="left:0px;width:56px;border-left-color:transparent;"><div style="display:flex;align-items:center">11/11/2019<br>11:55 AM</div></div>
<div class="c" style="left:56px;width:55px;"><div style="display:flex;align-items:center">Bear-0005</div></div>
<div class="c" style="left:111px;width:67px;"><div style="display:flex;align-items:center">RyGuy</div></div>
<div class="c" style="left:178px;width:56px;"><div style="display:flex;align-items:center"><svg style="position:static;flex:none;margin-left:-.5px;margin-right:5.8px" width="10" height="9.6" viewBox="0 0 12 11.5"><rect width="12" height="11.5" rx="2" fill="#5cb85c"/><path d="M2.6,5.8 L5,8.2 L9.6,3.4" fill="none" stroke="#fff" stroke-width="1.9"/></svg><span class="st">Pass</span></div></div>
<div class="c tk" style="left:234px;width:57px;"><div style="display:flex;align-items:center">Pass: 6</div></div>
<div class="c" style="left:291px;width:54px;"><div style="display:flex;align-items:center">Crane<br>Inspection</div></div>
<div class="c" style="left:345px;width:445px;"><div style="display:flex;align-items:center">All inspection items passed.</div></div>
<div class="c" style="left:790px;width:54px;"><div style="display:flex;align-items:center"></div></div>
<div class="c" style="left:844px;width:66px;"><div style="display:flex;align-items:center"></div></div>
<div class="c" style="left:910px;width:73px"><div class="ab" style="left:7px"><svg style="left:3.2px;top:4.2px" width="9" height="9" viewBox="0 0 12 12"><path d="M0,12 L.9,8.6 L8.2,1.3 L10.7,3.8 L3.4,11.1Z M9,.5 L9.6,0 Q10.2,-.3 10.8,.3 L11.7,1.2 Q12.3,1.8 12,2.4 L11.5,3Z" fill="#111"/></svg></div><div class="ab" style="left:27.2px"><svg style="left:3.1px;top:4.2px" width="9" height="9" viewBox="0 0 12 12"><circle cx="6" cy="6" r="5.2" fill="none" stroke="#111" stroke-width="1.2"/><path d="M4.2,4.2 L7.8,7.8 M7.8,4.2 L4.2,7.8" stroke="#111" stroke-width="1.5"/></svg></div><div class="ab" style="left:47.5px"><svg style="left:3.1px;top:4.6px" width="9" height="7.2" viewBox="0 0 14 11"><path d="M0,8 A7,7.4 0 0 1 14,8 Q14,10 13,11 H1 Q0,10 0,8Z" fill="#111"/><circle cx="2.8" cy="7" r=".9" fill="#fff"/><circle cx="4.4" cy="3.8" r=".9" fill="#fff"/><circle cx="9.8" cy="3.8" r=".9" fill="#fff"/><circle cx="11.3" cy="7" r=".9" fill="#fff"/><path d="M7,9 L7.6,3" stroke="#fff" stroke-width="1.2"/><circle cx="7" cy="8.8" r="1.5" fill="#fff"/></svg></div></div>
</div>
<div class="row " style="top:186px;height:37px">
<div class="c" style="left:0px;width:56px;border-left-color:transparent;"><div style="display:flex;align-items:center">11/11/2019<br>11:44 AM</div></div>
<div class="c" style="left:56px;width:55px;"><div style="display:flex;align-items:center">Dan's<br>Jeep<br>Cherokee</div></div>
<div class="c" style="left:111px;width:67px;"><div style="display:flex;align-items:center">Steve<br>Stephens</div></div>
<div class="c" style="left:178px;width:56px;"><div style="display:flex;align-items:center"><svg style="position:static;flex:none;margin-left:-.5px;margin-right:5.8px" width="10" height="9.6" viewBox="0 0 12 11.5"><rect width="12" height="11.5" rx="2" fill="#5cb85c"/><path d="M2.6,5.8 L5,8.2 L9.6,3.4" fill="none" stroke="#fff" stroke-width="1.9"/></svg><span class="st">Pass</span></div></div>
<div class="c tk" style="left:234px;width:57px;"><div style="display:flex;align-items:center">Pass: 2</div></div>
<div class="c" style="left:291px;width:54px;"><div style="display:flex;align-items:center">Inspectify<br>the Flux<br>Capacitor</div></div>
<div class="c" style="left:345px;width:445px;"><div style="display:flex;align-items:center"></div></div>
<div class="c" style="left:790px;width:54px;"><div style="display:flex;align-items:center"></div></div>
<div class="c" style="left:844px;width:66px;"><div style="display:flex;align-items:center"></div></div>
<div class="c" style="left:910px;width:73px"><div class="ab" style="left:7px"><svg style="left:3.2px;top:4.2px" width="9" height="9" viewBox="0 0 12 12"><path d="M0,12 L.9,8.6 L8.2,1.3 L10.7,3.8 L3.4,11.1Z M9,.5 L9.6,0 Q10.2,-.3 10.8,.3 L11.7,1.2 Q12.3,1.8 12,2.4 L11.5,3Z" fill="#111"/></svg></div><div class="ab" style="left:27.2px"><svg style="left:3.1px;top:4.2px" width="9" height="9" viewBox="0 0 12 12"><circle cx="6" cy="6" r="5.2" fill="none" stroke="#111" stroke-width="1.2"/><path d="M4.2,4.2 L7.8,7.8 M7.8,4.2 L4.2,7.8" stroke="#111" stroke-width="1.5"/></svg></div><div class="ab" style="left:47.5px"><svg style="left:3.1px;top:4.6px" width="9" height="7.2" viewBox="0 0 14 11"><path d="M0,8 A7,7.4 0 0 1 14,8 Q14,10 13,11 H1 Q0,10 0,8Z" fill="#111"/><circle cx="2.8" cy="7" r=".9" fill="#fff"/><circle cx="4.4" cy="3.8" r=".9" fill="#fff"/><circle cx="9.8" cy="3.8" r=".9" fill="#fff"/><circle cx="11.3" cy="7" r=".9" fill="#fff"/><path d="M7,9 L7.6,3" stroke="#fff" stroke-width="1.2"/><circle cx="7" cy="8.8" r="1.5" fill="#fff"/></svg></div></div>
</div>
<div class="row odd" style="top:223px;height:48px">
<div class="c" style="left:0px;width:56px;border-left-color:transparent;"><div style="display:flex;align-items:center">11/11/2019<br>08:22 AM</div></div>
<div class="c" style="left:56px;width:55px;"><div style="display:flex;align-items:center">Bear-0029</div></div>
<div class="c" style="left:111px;width:67px;"><div style="display:flex;align-items:center">John Smith</div></div>
<div class="c" style="left:178px;width:56px;"><div style="display:flex;align-items:center"><svg style="position:static;flex:none;margin-left:-.8px;margin-right:5px" width="9.8" height="9.8" viewBox="0 0 12 12"><circle cx="6" cy="6" r="6" fill="#d9534f"/><path d="M3.7,3.7 L8.3,8.3 M8.3,3.7 L3.7,8.3" stroke="#fff" stroke-width="2"/></svg><span class="st">Fail</span></div></div>
<div class="c tk" style="left:234px;width:57px;"><div style="display:flex;align-items:center">Pass: 2<br>Fail: 1</div></div>
<div class="c" style="left:291px;width:54px;"><div style="display:flex;align-items:center">Passenger<br>Vehicle<br>Inspection</div></div>
<div class="c" style="left:345px;width:445px;"><div style="display:flex;align-items:center"></div></div>
<div class="c" style="left:790px;width:54px;"><div style="display:flex;align-items:center">Repairs<br>Required</div></div>
<div class="c" style="left:844px;width:66px;"><div style="display:flex;align-items:center">Brakes need<br>repair...is<br>scheduled for<br>maintenance<br></div></div>
<div class="c" style="left:910px;width:73px"><div class="ab" style="left:7px"><svg style="left:3.2px;top:4.2px" width="9" height="9" viewBox="0 0 12 12"><path d="M0,12 L.9,8.6 L8.2,1.3 L10.7,3.8 L3.4,11.1Z M9,.5 L9.6,0 Q10.2,-.3 10.8,.3 L11.7,1.2 Q12.3,1.8 12,2.4 L11.5,3Z" fill="#111"/></svg></div><div class="ab" style="left:27.2px"><svg style="left:3.1px;top:4.2px" width="9" height="9" viewBox="0 0 12 12"><circle cx="6" cy="6" r="5.2" fill="none" stroke="#111" stroke-width="1.2"/><path d="M4.2,4.2 L7.8,7.8 M7.8,4.2 L4.2,7.8" stroke="#111" stroke-width="1.5"/></svg></div><div class="ab" style="left:47.5px"><svg style="left:3.1px;top:4.6px" width="9" height="7.2" viewBox="0 0 14 11"><path d="M0,8 A7,7.4 0 0 1 14,8 Q14,10 13,11 H1 Q0,10 0,8Z" fill="#111"/><circle cx="2.8" cy="7" r=".9" fill="#fff"/><circle cx="4.4" cy="3.8" r=".9" fill="#fff"/><circle cx="9.8" cy="3.8" r=".9" fill="#fff"/><circle cx="11.3" cy="7" r=".9" fill="#fff"/><path d="M7,9 L7.6,3" stroke="#fff" stroke-width="1.2"/><circle cx="7" cy="8.8" r="1.5" fill="#fff"/></svg></div></div>
</div>
</div>
<div class="a" style="left:9px;top:220px;width:1px;height:260px;background:#ddd"></div>
<div class="a" style="left:992.6px;top:220px;width:10.6px;height:260px;background:#f1f1f1"></div>
<div class="a" style="left:994.4px;top:231.8px;width:7.6px;height:38px;background:#c1c1c1"></div>
<svg style="left:995.5px;top:225.4px" width="4.8" height="2.4" viewBox="0 0 10 5"><path d="M0,5 L5,0 L10,5Z" fill="#a3a3a3"/></svg>
<div class="a" style="left:1013.4px;top:46px;width:11px;height:435px;background:#f1f1f1"></div>
<div class="a" style="left:1015.2px;top:57px;width:7.7px;height:340px;background:#c1c1c1"></div>
<svg style="left:1016.6px;top:50.6px" width="4.8" height="2.4" viewBox="0 0 10 5"><path d="M0,5 L5,0 L10,5Z" fill="#a3a3a3"/></svg>
<svg style="left:1016.6px;top:473.8px" width="4.8" height="2.4" viewBox="0 0 10 5"><path d="M0,0 L5,5 L10,0Z" fill="#505050"/></svg>
<div class="a" style="left:1024px;top:0;width:1px;height:481px;background:#a8a8a8"></div>
<div class="a" style="left:0;top:480px;width:1025px;height:1px;background:#a8a8a8"></div>
</div></body></html>
